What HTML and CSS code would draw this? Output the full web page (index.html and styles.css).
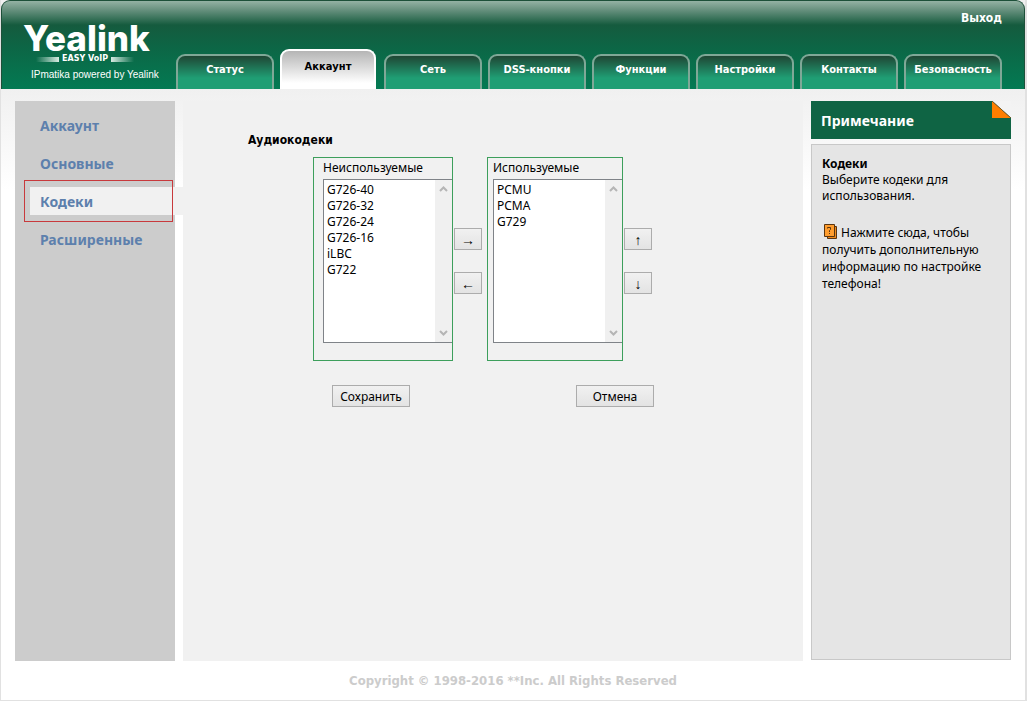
FILE: index.html
```html
<!DOCTYPE html>
<html lang="ru">
<head>
<meta charset="utf-8">
<title>Yealink</title>
<link rel="stylesheet" href="styles.css">
</head>
<body>
<div class="page">
  <header class="header">
    <div class="brand">
      <div class="logo">Yealink</div>
      <div class="tagline"><span class="bar bar-left"></span><span class="tagline-text">EASY VoIP</span><span class="bar bar-right"></span></div>
      <div class="powered">IPmatika powered by Yealink</div>
    </div>
    <div class="header-main">
      <a class="logout" href="#">Выход</a>
      <nav class="tabs">
        <a class="tab" href="#">Статус</a>
        <a class="tab active" href="#">Аккаунт</a>
        <a class="tab" href="#">Сеть</a>
        <a class="tab" href="#">DSS-кнопки</a>
        <a class="tab" href="#">Функции</a>
        <a class="tab" href="#">Настройки</a>
        <a class="tab" href="#">Контакты</a>
        <a class="tab" href="#">Безопасность</a>
      </nav>
    </div>
  </header>
  <div class="columns">
    <nav class="sidebar">
      <a class="side-link" href="#">Аккаунт</a>
      <a class="side-link" href="#">Основные</a>
      <a class="side-link current" href="#">Кодеки</a>
      <a class="side-link" href="#">Расширенные</a>
    </nav>
    <main class="content">
      <h1 class="section-title">Аудиокодеки</h1>
      <form class="codecs">
        <div class="lists">
          <div class="codec-box">
            <label class="list-label" for="unused">Неиспользуемые</label>
            <div class="list">
              <select class="list-select" id="unused" multiple size="10">
                <option>G726-40</option>
                <option>G726-32</option>
                <option>G726-24</option>
                <option>G726-16</option>
                <option>iLBC</option>
                <option>G722</option>
              </select>
              <div class="scrollbar">
                <svg width="9" height="6" viewBox="0 0 9 6"><path d="M1 5 4.500 1.500 8 5"/></svg>
                <svg width="9" height="6" viewBox="0 0 9 6"><path d="M1 1 4.500 4.500 8 1"/></svg>
              </div>
            </div>
          </div>
          <div class="movers">
            <button class="btn arrow" type="button">→</button>
            <button class="btn arrow" type="button">←</button>
          </div>
          <div class="codec-box used">
            <label class="list-label" for="used">Используемые</label>
            <div class="list">
              <select class="list-select" id="used" multiple size="10">
                <option>PCMU</option>
                <option>PCMA</option>
                <option>G729</option>
              </select>
              <div class="scrollbar">
                <svg width="9" height="6" viewBox="0 0 9 6"><path d="M1 5 4.500 1.500 8 5"/></svg>
                <svg width="9" height="6" viewBox="0 0 9 6"><path d="M1 1 4.500 4.500 8 1"/></svg>
              </div>
            </div>
          </div>
          <div class="movers">
            <button class="btn arrow" type="button">↑</button>
            <button class="btn arrow" type="button">↓</button>
          </div>
        </div>
        <div class="actions">
          <button class="btn" type="button">Сохранить</button>
          <button class="btn" type="button">Отмена</button>
        </div>
      </form>
    </main>
    <aside class="note">
      <div class="note-head">
        <h2 class="note-title">Примечание</h2>
        <svg class="fold" width="19" height="17" viewBox="0 0 19 17"><path d="M0 0H19V17Z" fill="#f3f3f3"/><path d="M0 0V17H19Z" fill="#ff7e00"/><path d="M0 0 19 17" stroke="#6b5a2c"/></svg>
      </div>
      <div class="note-body">
        <h3 class="note-subject">Кодеки</h3>
        <p class="note-text">Выберите кодеки для использования.</p>
        <p class="note-help"><a class="help-link" href="#"><svg class="book" width="14" height="15" viewBox="0 0 14 15"><path d="M3.500 2.500H12.500V14.500H3.500Z" fill="#f08a1c" stroke="#5a3510"/><path d="M.5 .5H10.500V12.500H.5Z" fill="#ff9d2e" stroke="#5a3510"/><path d="M3.500 4.500V3.500H6.500V5.500L5.500 6.500V8M5 9.500H6" fill="none" stroke="#5a3510"/></svg> Нажмите сюда, чтобы получить дополнительную информацию по настройке телефона!</a></p>
      </div>
    </aside>
  </div>
  <footer class="footer">Copyright © 1998-2016 **Inc. All Rights Reserved</footer>
</div>
</body>
</html>
```
FILE: styles.css
```css
* { box-sizing: border-box; }
body {
  margin: 0;
  background: #e1e1e1;
  font: 12px/16px "Noto Sans", sans-serif;
  color: #000;
}
a { color: inherit; text-decoration: none; }
h1, h2, h3, p { margin: 0; }
.page {
  display: flex;
  flex-direction: column;
  min-height: 100vh;
  border: solid #e1e1e1;
  border-width: 0 2px 1px 1px;
  background: linear-gradient(#f0f0f0 89px, #fff 190px);
}
.header {
  display: flex;
  height: 89px;
  border: 1px solid #1d5039;
  border-width: 1px 1px 0;
  border-radius: 9px 9px 0 0;
  background: linear-gradient(#94b2a4 0, #6c9482 8px, #155b3e 24px, #0c6746 48px, #037a53 100%);
  color: #fff;
}
.brand { width: 174px; padding: 21px 0 0 21px; }
.logo { font: 800 35px/33px Inter, sans-serif; }
.tagline { display: flex; align-items: center; gap: 3px; height: 8px; padding-left: 13px; }
.tagline-text { font: bold 8px/8px "DejaVu Sans", sans-serif; }
.bar { width: 23px; height: 5px; }
.bar-left { background: linear-gradient(90deg, transparent, #d8ebe2); }
.bar-right { background: linear-gradient(90deg, #d8ebe2, transparent); }
.powered { padding: 4px 0 0 8px; font: 10px/16px "Liberation Sans", sans-serif; white-space: nowrap; }
.header-main { display: flex; flex: 1; flex-direction: column; justify-content: space-between; }
.logout { align-self: flex-end; padding: 9px 22px 0 0; font: bold 12px/16px "DejaVu Sans Condensed", "Noto Sans", sans-serif; }
.tabs { display: flex; align-items: flex-end; gap: 6px; }
.tab {
  width: 98px;
  height: 35px;
  border: 2px solid #7fa897;
  border-bottom: 0;
  border-radius: 9px 9px 0 0;
  background: linear-gradient(#1f4634 0, #1f9e74 22px);
  font: bold 11px/28px "DejaVu Sans Condensed", "Noto Sans", sans-serif;
  text-align: center;
  white-space: nowrap;
}
.tab.active {
  width: 96px;
  height: 40px;
  margin-right: 2px;
  border-color: #fff;
  background: linear-gradient(#b5b5b5, #fff 32px);
  color: #000;
  line-height: 32px;
}
.columns { display: flex; flex: 1; gap: 8px; padding: 12px 14px 0; }
.sidebar {
  display: flex;
  flex-direction: column;
  gap: 10px;
  width: 160px;
  min-height: 560px;
  padding: 10px 0 0 15px;
  background: #ccc;
}
.side-link {
  position: relative;
  padding: 1px 10px 0;
  color: #5d80ad;
  font-weight: bold;
  font-size: 14px;
  line-height: 27px;
}
.side-link.current { margin-right: -8px; background: #f1f1f1; }
.side-link.current::after {
  content: "";
  position: absolute;
  inset: -7px 10px -7px -6px;
  border: 1px solid #c8393c;
}
.content { flex: 1; padding: 30px 0 0 65px; background: #f1f1f1; }
.section-title { font: bold 12px/18px "DejaVu Sans Condensed", "Noto Sans", sans-serif; }
.codecs { padding: 8px 0 0 65px; }
.lists { display: flex; align-items: flex-start; }
.codec-box { width: 140px; height: 204px; padding-left: 9px; border: 1px solid #3d9f5c; }
.codec-box.used { width: 136px; margin-left: 5px; padding-left: 5px; }
.list-label { display: block; padding-bottom: 2px; line-height: 19px; }
.list { display: flex; height: 164px; border: 1px solid #7f8388; border-right: 0; background: #fff; }
.list-select {
  flex: 1;
  min-width: 0;
  padding: 1px 0;
  border: 0;
  outline: 0;
  background: #fff;
  color: #000;
  font: 12px/16px "Noto Sans", sans-serif;
  scrollbar-width: none;
}
.list-select option { height: 16px; min-height: 16px; padding: 0 3px; line-height: 16px; }
.scrollbar {
  display: flex;
  flex-direction: column;
  align-items: center;
  justify-content: space-between;
  width: 17px;
  padding: 6px 0;
  background: #f0f0f0;
}
.scrollbar path { fill: none; stroke: #b5b5b5; stroke-width: 2; }
.movers { display: flex; flex-direction: column; gap: 22px; padding: 71px 0 0 1px; }
.btn {
  width: 78px;
  height: 22px;
  padding: 1px 0 0;
  border: 1px solid #acacac;
  background: linear-gradient(#f1f1f1, #e3e3e3);
  color: #000;
  font: 12px/16px "Noto Sans", sans-serif;
}
.btn.arrow { width: 28px; padding-top: 2px; font: 14px/18px "Liberation Sans", sans-serif; }
.actions { display: flex; gap: 166px; padding: 24px 0 0 19px; }
.note { display: flex; flex-direction: column; gap: 5px; width: 200px; padding-bottom: 1px; }
.note-head {
  display: flex;
  align-items: flex-start;
  justify-content: space-between;
  height: 38px;
  padding-left: 10px;
  background: #0f6444;
  color: #fff;
}
.note-title { font-size: 14px; line-height: 40px; }
.note-body { flex: 1; padding: 11px 10px; border: 1px solid #c8c8c8; background: #e5e5e5; }
.note-subject { font-size: 12px; line-height: 16px; }
.note-help { padding-top: 20px; line-height: 17px; }
.book { margin-left: 2px; vertical-align: -2px; }
.footer {
  padding: 11px 0;
  color: #ccc;
  font: bold 13px/17px "DejaVu Sans Condensed", "Noto Sans", sans-serif;
  text-align: center;
}
```
